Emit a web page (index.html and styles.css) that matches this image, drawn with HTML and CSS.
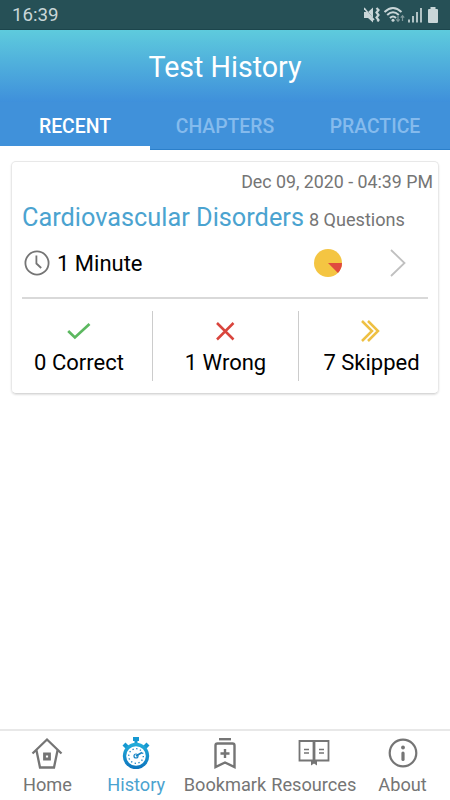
FILE: index.html
```html
<!DOCTYPE html>
<html lang="en">
<head>
  <meta charset="UTF-8">
  <meta name="viewport" content="width=device-width, initial-scale=1.0">
  <title>Test History</title>
  <link rel="stylesheet" href="styles.css">
</head>
<body>
  <div class="app">
    <div class="status-bar">
      <span class="time">16:39</span>
      <svg class="status-icons" width="76" height="18" viewBox="0 0 76 18">
        <!-- muted / vibrate -->
        <path d="M0 6h4l5-4.500v15L4 12H0z" fill="#c9d6d8"/>
        <path d="M1 2l10 13" stroke="#265056" stroke-width="1"/>
        <path d="M0 2l10 12" stroke="#c9d6d8" stroke-width="1.600"/>
        <path d="M12.500 2l2 2-2 2.500 2 2.500-2 2.500 2 2.500-1 1.500" fill="none" stroke="#c9d6d8" stroke-width="2.200"/>
        <!-- wifi -->
        <path d="M20.500 6q8.500-8 17 0M23.200 9q5.800-5.500 11.600 0M26 12q3-3 6 0" fill="none" stroke="#c9d6d8" stroke-width="2"/>
        <circle cx="29" cy="14.300" r="1.500" fill="#c9d6d8"/>
        <path d="M34 10v5M32.300 13.300l1.700 2 1.700-2M38.500 15v-5M36.800 11.700l1.700-2 1.700 2" fill="none" stroke="#7f989b" stroke-width="1.200"/>
        <!-- signal -->
        <path d="M45 13.500v3M49 10v6.500M53 6v10.500M57 2v14.500" stroke="#c9d6d8" stroke-width="1.700"/>
        <!-- battery -->
        <path d="M66.500 1h5v2h1.500q1 0 1 1v12q0 1-1 1h-8q-1 0-1-1V4q0-1 1-1h1.500z" fill="#c9d6d8"/>
      </svg>
    </div>

    <header class="header">
      <h1>Test History</h1>
    </header>

    <nav class="tabs">
      <a class="tab active">RECENT</a>
      <a class="tab">CHAPTERS</a>
      <a class="tab">PRACTICE</a>
    </nav>

    <main class="content">
      <div class="card">
        <div class="date">Dec 09, 2020 - 04:39 PM</div>
        <div class="subject">
          <h2>Cardiovascular Disorders</h2>
          <span>8 Questions</span>
        </div>
        <div class="duration">
          <svg width="26" height="26" viewBox="0 0 26 26" fill="none" stroke="#757575" stroke-width="1.800">
            <circle cx="13" cy="13" r="11.600"/>
            <path d="M12.400 5.500v8l4.800 4.500"/>
          </svg>
          <span>1 Minute</span>
          <svg class="pie" width="28" height="28" viewBox="0 0 28 28">
            <circle cx="14" cy="14" r="14" fill="#f4c542"/>
            <path d="M14 14h14a14 14 0 0 1-4.100 9.900z" fill="#e04a3f"/>
          </svg>
          <svg class="chevron" width="16" height="28" viewBox="0 0 16 28" fill="none" stroke="#c0c0c0" stroke-width="1.800">
            <path d="M1 1l13.500 13L1 27"/>
          </svg>
        </div>
        <div class="results">
          <div class="result">
            <svg width="24" height="24" viewBox="0 0 24 24" fill="none" stroke="#5cb860" stroke-width="2.700">
              <path d="M1.200 12l6.700 6.500L22.500 5"/>
            </svg>
            <span>0 Correct</span>
          </div>
          <div class="result">
            <svg width="24" height="24" viewBox="0 0 24 24" fill="none" stroke="#d9453d" stroke-width="2.500">
              <path d="M3 4l16.500 16.500M19.500 4L3 20.500"/>
            </svg>
            <span>1 Wrong</span>
          </div>
          <div class="result">
            <svg width="24" height="24" viewBox="0 0 24 24" fill="none" stroke="#eec043" stroke-width="2.500">
              <path d="M2 2l10 10L2 22M8 2l10 10L8 22"/>
            </svg>
            <span>7 Skipped</span>
          </div>
        </div>
      </div>
    </main>

    <nav class="bottom-nav">
      <a class="nav-item">
        <svg width="32" height="32" viewBox="0 0 32 32" fill="none" stroke="#757575" stroke-width="2.300">
          <path d="M1.500 16.500L16 2.500l14.500 14M5.500 13.500l3.500 17h14l3.500-17"/>
          <path d="M13.500 17h5v5h-5z" stroke-width="2.800"/>
        </svg>
        <span>Home</span>
      </a>
      <a class="nav-item active">
        <svg width="32" height="32" viewBox="0 0 32 32">
          <defs>
            <linearGradient id="watch" x1="0" y1="0" x2="0" y2="1">
              <stop offset="0" stop-color="#23afdb"/>
              <stop offset="1" stop-color="#0d73bd"/>
            </linearGradient>
          </defs>
          <path d="M13 0h6v4h-1.500v4h-3V4H13zM2.500 8.500l3-3 4.500 4.500-3 3zM29.500 8.500l-3-3-4.500 4.500 3 3z" fill="#1598d1"/>
          <circle cx="16" cy="19" r="13.200" fill="url(#watch)"/>
          <circle cx="16" cy="19" r="9.800" fill="#fff"/>
          <circle cx="16" cy="19" r="7.300" fill="none" stroke="#1683c4" stroke-width="1.300" stroke-dasharray="1.300 2.520"/>
          <circle cx="16" cy="19" r="2" fill="none" stroke="#1683c4" stroke-width="1.200"/>
          <path d="M16 19l6-3.500" stroke="#1683c4" stroke-width="1.600"/>
        </svg>
        <span>History</span>
      </a>
      <a class="nav-item">
        <svg width="32" height="32" viewBox="0 0 32 32" fill="none" stroke="#757575" stroke-width="2.400">
          <path d="M10 2.200h12"/>
          <path d="M6.500 30V8.500q0-2 2-2h15q2 0 2 2V30L16 25.500z"/>
          <path d="M11.500 16.500h9M16 12v9"/>
        </svg>
        <span>Bookmark</span>
      </a>
      <a class="nav-item">
        <svg width="32" height="32" viewBox="0 0 32 32" fill="none" stroke="#757575" stroke-width="1.800">
          <path d="M1.500 4h29v19.500h-29z"/>
          <path d="M16 4v20" stroke-width="2.800"/>
          <path d="M6 12.500h5M6 16h5M21 12.500h5M21 16h5" stroke-width="1.500"/>
          <path d="M13 23h6v5.500L16 26.500l-3 2z" fill="#757575" stroke="none"/>
        </svg>
        <span>Resources</span>
      </a>
      <a class="nav-item">
        <svg width="32" height="32" viewBox="0 0 32 32" fill="none" stroke="#757575" stroke-width="2.200">
          <circle cx="16" cy="16" r="13.300"/>
          <path d="M16 16v6.500" stroke-width="3.200" stroke-linecap="round"/>
          <circle cx="16" cy="10.500" r="1.900" fill="#757575" stroke="none"/>
        </svg>
        <span>About</span>
      </a>
    </nav>
  </div>
</body>
</html>
```
FILE: styles.css
```css
* {
  box-sizing: border-box;
}
body {
  margin: 0;
  font-family: Roboto, Arial, sans-serif;
  background-color: #fff;
}
h1, h2 {
  margin: 0;
  font-weight: 400;
}
svg {
  display: block;
  flex-shrink: 0;
}
.app {
  display: flex;
  flex-direction: column;
  height: 800px;
  overflow: hidden;
}
.status-bar {
  display: flex;
  align-items: center;
  justify-content: space-between;
  height: 30px;
  padding: 0 10px 0 12px;
  background-color: #265056;
  border-bottom: 1px solid #1c454c;
}
.time {
  font-size: 18.7px;
  line-height: 30px;
  padding-top: 1px;
  color: #c9d6d8;
}
.header {
  height: 72px;
  background: linear-gradient(#5ecbdd, #3f90db);
}
.header h1 {
  font-size: 28.6px;
  line-height: 74px;
  text-align: center;
  color: #fff;
}
.tabs {
  display: flex;
  height: 48px;
  background-color: #4091da;
}
.tab {
  flex: 1;
  border-bottom: 1px solid #2b7fca;
  font-size: 19.4px;
  font-weight: 500;
  line-height: 50px;
  text-align: center;
  color: #85bbed;
}
.tab.active {
  border-bottom: 4px solid #fff;
  color: #fff;
}
.content {
  flex: 1;
  padding: 11px;
}
.card {
  height: 233px;
  padding: 0 5px 0 10px;
  border: 1px solid #e8e8e8;
  border-bottom-color: #d8d8d8;
  border-radius: 5px;
  box-shadow: 0 1px 2px rgba(0, 0, 0, 0.12);
}
.date {
  font-size: 17.8px;
  line-height: 39px;
  text-align: right;
  color: #757575;
}
.subject {
  display: flex;
  align-items: baseline;
  gap: 5px;
  line-height: 34px;
}
.subject h2 {
  font-size: 25.3px;
  color: #4ba3d0;
}
.subject span {
  font-size: 18.1px;
  color: #757575;
}
.duration {
  display: flex;
  align-items: center;
  height: 62px;
  margin-right: 5px;
  padding: 0 22px 8px 2px;
  border-bottom: 2px solid #d9d9d9;
}
.duration span {
  margin-left: 7px;
  font-size: 22px;
}
.pie {
  margin-left: auto;
}
.chevron {
  margin-left: 48px;
}
.results {
  display: flex;
  margin: 12px -5px 0 -16px;
}
.result {
  flex: 0 0 146px;
  display: flex;
  flex-direction: column;
  align-items: center;
  height: 70px;
  padding-top: 8px;
  font-size: 22px;
  line-height: 39px;
}
.result + .result {
  border-left: 1px solid #ccc;
}
.bottom-nav {
  display: flex;
  height: 71px;
  padding: 0 3px;
  border-top: 2px solid #e8e8e8;
}
.nav-item {
  flex: 0 0 88.8px;
  display: flex;
  flex-direction: column;
  align-items: center;
  padding-top: 6px;
  font-size: 18.2px;
  line-height: 31px;
  color: #757575;
}
.nav-item.active {
  color: #4ba3d0;
}
```
